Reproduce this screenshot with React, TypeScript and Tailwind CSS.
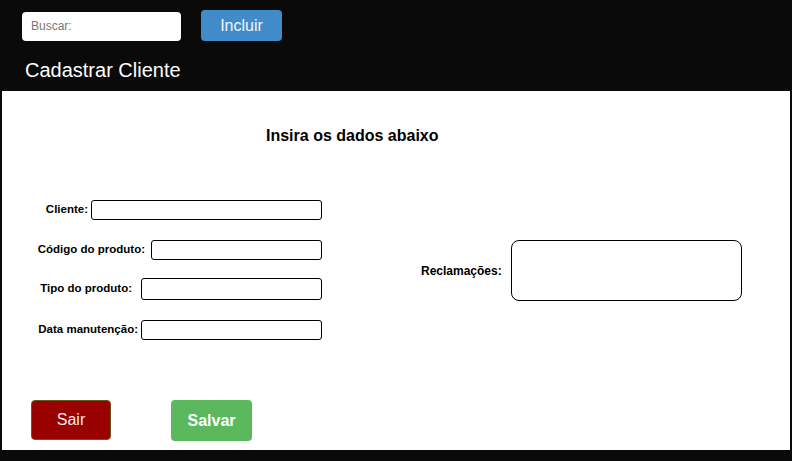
import React from "react";

const font = { fontFamily: '"Liberation Sans", Arial, sans-serif' };

function Field({ label, width, gap, height = "h-[20px]" }: { label: string; width: string; gap: string; height?: string }) {
  return (
    <div className="flex items-center justify-end">
      <label className={`text-[11.5px] font-bold text-black ${gap}`}>{label}</label>
      <input className={`${width} ${height} border border-black rounded-[3px] bg-white outline-none`} />
    </div>
  );
}

export default function App() {
  return (
    <div className="w-[792px] h-[461px] bg-[#0a0a0a] flex flex-col overflow-hidden" style={font}>
      <header className="h-[91px] flex flex-col">
        <div className="flex items-center pl-[22px] pt-[10px] gap-[20px]">
          <input
            placeholder="Buscar:"
            className="w-[159px] h-[29px] mt-[1px] rounded-[4px] bg-white px-[9px] text-[12px] text-gray-700 placeholder:text-[#777] outline-none"
          />
          <button className="w-[81px] h-[31px] rounded-[4px] bg-[#428bca] text-[#f2f6fb] text-[16px] font-light">Incluir</button>
        </div>
        <h1 className="pl-[25px] mt-[17px] text-white text-[20px] leading-[24px]">Cadastrar Cliente</h1>
      </header>

      <main className="mx-[2px] h-[359px] bg-white flex flex-col">
        <h2 className="pl-[264px] text-[16px] font-bold text-black mt-[36px] leading-[18px]">Insira os dados abaixo</h2>

        <div className="flex mt-[55px]">
          <div className="w-[320px] flex flex-col">
            <Field label="Cliente:" width="w-[231px]" gap="mr-[3px]" />
            <div className="h-[20px]" />
            <Field label="Código do produto:" width="w-[171px]" gap="mr-[6px]" />
            <div className="h-[18px]" />
            <Field label="Tipo do produto:" width="w-[181px]" gap="mr-[9px]" height="h-[22px]" />
            <div className="h-[20px]" />
            <Field label="Data manutenção:" width="w-[181px]" gap="mr-[3px]" />
          </div>
          <div className="flex items-center ml-[99px] mt-[40px] self-start">
            <label className="text-[12px] font-bold text-black mr-[9px]">Reclamações:</label>
            <textarea className="w-[231px] h-[61px] border border-black rounded-[8px] resize-none outline-none" />
          </div>
        </div>

        <div className="flex mt-[60px] pl-[29px] gap-[60px]">
          <button className="w-[80px] h-[40px] rounded-[4px] bg-[#990000] border border-[#6b5a1e] text-[#f5eaea] text-[16px] font-light">Sair</button>
          <button className="w-[81px] h-[41px] rounded-[4px] bg-[#5cb85c] text-white text-[16px] font-bold">Salvar</button>
        </div>
      </main>
    </div>
  );
}
